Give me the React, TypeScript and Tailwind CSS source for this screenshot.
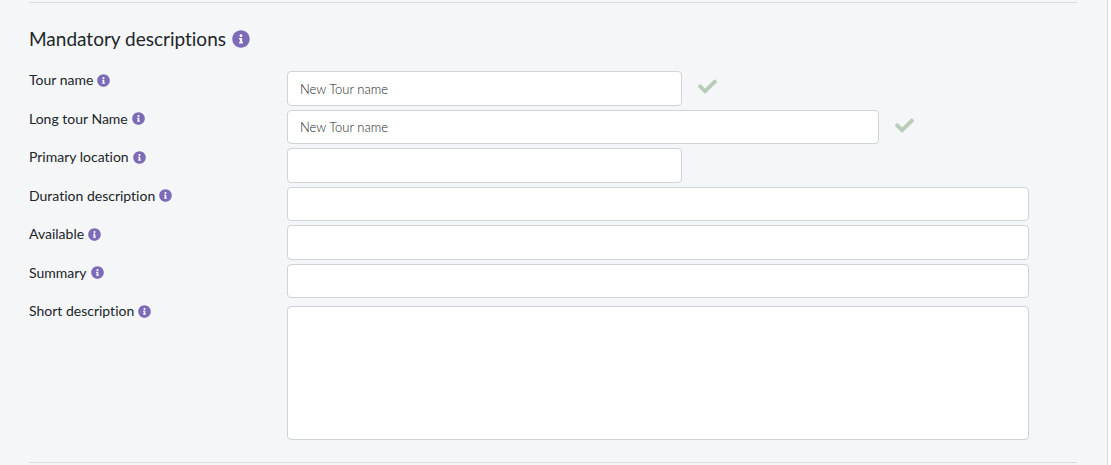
import { useState } from 'react';
import { FaCheck, FaInfoCircle } from 'react-icons/fa';

type FieldProps = {
  id: string;
  label: string;
  width: string;
  initial?: string;
};

const control =
  'block w-full rounded border border-[#ced4da] bg-white px-3 text-[13px] font-light text-[#212529] outline-none focus:border-[#7d6bb8]';

function FieldLabel({ id, label }: { id: string; label: string }) {
  return (
    <label
      htmlFor={id}
      className="flex w-[258px] shrink-0 items-center gap-1 self-start text-sm leading-[18px] text-[#212529]"
    >
      {label}
      <FaInfoCircle className="size-[13px] text-[#7d6bb8]" aria-hidden="true" />
    </label>
  );
}

function TextField({ id, label, width, initial = '' }: FieldProps) {
  const [value, setValue] = useState(initial);
  return (
    <div className="flex">
      <FieldLabel id={id} label={label} />
      <div className="flex flex-1 gap-4">
        <input
          id={id}
          type="text"
          value={value}
          onChange={(e) => setValue(e.target.value)}
          className={`${control} ${width} pt-0.5`}
        />
        {value && <FaCheck className="mt-1.5 size-[19px] shrink-0 text-[#b9ccb7]" aria-label="Valid" />}
      </div>
    </div>
  );
}

export default function App() {
  return (
    <div className="bg-white pr-[3px] font-['Lato',sans-serif] [font-variant-ligatures:none]">
      <main className="min-h-screen border-r border-[#dadde0] bg-[#f4f6f8] pt-0.5 pr-[30px] pl-[29px]">
        <hr className="border-[#dadde0]" />
        <form className="pt-[22px] pr-12 pb-[22px]">
          <h2 className="flex items-center gap-1.5 text-[19px] leading-7 text-[#212529]">
            Mandatory descriptions
            <FaInfoCircle className="size-[18px] text-[#7d6bb8]" aria-hidden="true" />
          </h2>
          <div className="mt-[18px] grid h-[227px] auto-rows-fr gap-1">
            <TextField id="tour-name" label="Tour name" width="max-w-[395px]" initial="New Tour name" />
            <TextField id="long-tour-name" label="Long tour Name" width="max-w-[592px]" initial="New Tour name" />
            <TextField id="primary-location" label="Primary location" width="max-w-[395px]" />
            <TextField id="duration" label="Duration description" width="max-w-full" />
            <TextField id="available" label="Available" width="max-w-full" />
            <TextField id="summary" label="Summary" width="max-w-full" />
          </div>
          <div className="mt-1 flex">
            <FieldLabel id="short-description" label="Short description" />
            <textarea
              id="short-description"
              className={`${control} mt-1 h-[134px] flex-1 resize-none py-1.5`}
            />
          </div>
        </form>
        <hr className="border-[#dadde0]" />
      </main>
    </div>
  );
}
